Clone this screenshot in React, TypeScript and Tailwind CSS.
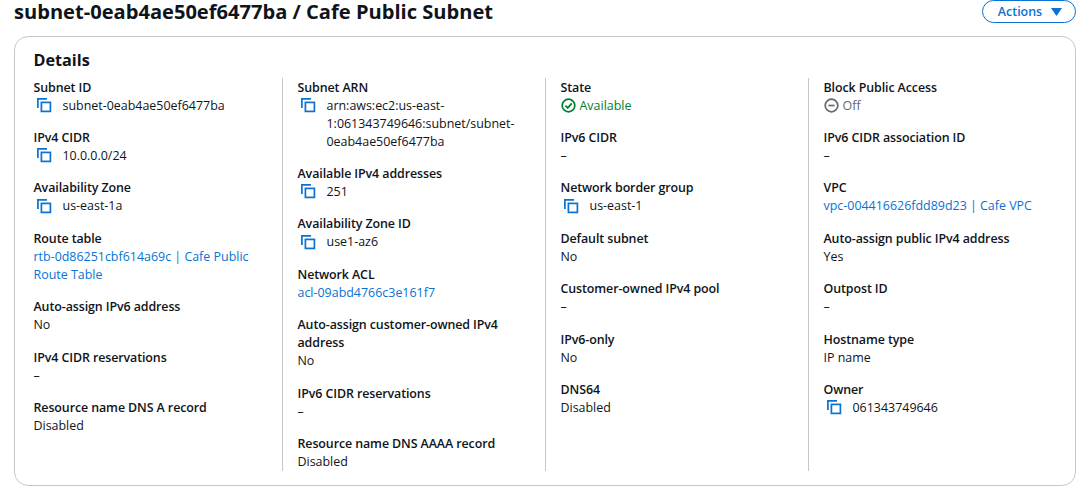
const F = "[font-family:'Open_Sans','Noto_Sans',sans-serif]";

function CopyIcon() {
  return (
    <svg width="16" height="16" viewBox="0 0 16 16" fill="none" stroke="#0972d3" strokeWidth="1.7" className="shrink-0">
      <path d="M1.9 11V1.9H11" />
      <rect x="5.4" y="5.4" width="9" height="9" />
    </svg>
  );
}

function Copy({ text }: { text: string }) {
  return (
    <div className="flex items-start pl-[2px]">
      <span className="w-[27px] shrink-0 pt-[0.5px]"><CopyIcon /></span>
      <span>{text}</span>
    </div>
  );
}

function Item({ label, children }: { label: string; children: React.ReactNode }) {
  return (
    <div>
      <div className="font-semibold tracking-[-0.1px] text-[#0f141a]">{label}</div>
      <div className="text-[#0f141a]">{children}</div>
    </div>
  );
}

const L = ({ children }: { children: React.ReactNode }) => <span className="text-[#0972d3]">{children}</span>;

function Col({ first, children }: { first?: boolean; children: React.ReactNode }) {
  return (
    <div className={first ? "flex w-[248.5px] flex-col gap-[14.4px] pt-[0.6px]" : "flex w-[263px] flex-col gap-[14.4px] border-l border-[#c6c6cd] pl-[14.5px] pr-[20px] pt-[0.6px]"}>
      {children}
    </div>
  );
}

export default function App() {
  return (
    <div className={`h-[489px] w-[1082px] overflow-hidden bg-white text-[12.45px] leading-[18px] ${F}`}>
      <div className="flex h-[36px] items-start justify-between pl-[14px] pr-[6px]">
        <h1 className="text-[20.1px] font-bold leading-[23px] text-[#0f141a]">subnet-0eab4ae50ef6477ba / Cafe Public Subnet</h1>
        <button className="flex h-[23px] w-[94px] items-center justify-center gap-[9px] rounded-full border border-[#0972d3] pl-[2px] text-[12.45px] font-semibold text-[#0972d3]">
          Actions
          <svg width="11" height="8" viewBox="0 0 11 8"><path d="M0 0h11L5.5 8z" fill="#0972d3" /></svg>
        </button>
      </div>
      <section className="ml-[14px] h-[450px] w-[1062px] rounded-[14px] border border-[#c6c6cd] pl-[18.5px] pt-[12px]">
        <h2 className="text-[16.2px] font-bold leading-[22px] text-[#0f141a]">Details</h2>
        <div className="mt-[7px] flex h-[393px] items-stretch">
          <Col first>
            <Item label="Subnet ID"><Copy text="subnet-0eab4ae50ef6477ba" /></Item>
            <Item label="IPv4 CIDR"><Copy text="10.0.0.0/24" /></Item>
            <Item label="Availability Zone"><Copy text="us-east-1a" /></Item>
            <Item label="Route table"><L>rtb-0d86251cbf614a69c | Cafe Public Route Table</L></Item>
            <Item label="Auto-assign IPv6 address">No</Item>
            <Item label="IPv4 CIDR reservations">–</Item>
            <Item label="Resource name DNS A record">Disabled</Item>
          </Col>
          <Col>
            <Item label="Subnet ARN"><Copy text="arn:aws:ec2:us-east-1:061343749646:subnet/subnet-0eab4ae50ef6477ba" /></Item>
            <Item label="Available IPv4 addresses"><Copy text="251" /></Item>
            <Item label="Availability Zone ID"><Copy text="use1-az6" /></Item>
            <Item label="Network ACL"><L>acl-09abd4766c3e161f7</L></Item>
            <Item label="Auto-assign customer-owned IPv4 address">No</Item>
            <Item label="IPv6 CIDR reservations">–</Item>
            <Item label="Resource name DNS AAAA record">Disabled</Item>
          </Col>
          <Col>
            <Item label="State">
              <span className="flex items-center gap-[4px] text-[#00802f]">
                <svg width="15" height="15" viewBox="0 0 15 15" fill="none" stroke="#00802f" strokeWidth="1.7"><circle cx="7.5" cy="7.5" r="6.3" /><path d="M4.4 7.6l2.3 2.3L10.8 5.4" /></svg>
                Available
              </span>
            </Item>
            <Item label="IPv6 CIDR">–</Item>
            <Item label="Network border group"><Copy text="us-east-1" /></Item>
            <Item label="Default subnet">No</Item>
            <Item label="Customer-owned IPv4 pool">–</Item>
            <Item label="IPv6-only">No</Item>
            <Item label="DNS64">Disabled</Item>
          </Col>
          <Col>
            <Item label="Block Public Access">
              <span className="flex items-center gap-[4px] text-[#656871]">
                <svg width="15" height="15" viewBox="0 0 15 15" fill="none" stroke="#656871" strokeWidth="1.7"><circle cx="7.5" cy="7.5" r="6.3" /><path d="M4.4 7.5h6.2" /></svg>
                Off
              </span>
            </Item>
            <Item label="IPv6 CIDR association ID">–</Item>
            <Item label="VPC"><L>vpc-004416626fdd89d23 | Cafe VPC</L></Item>
            <Item label="Auto-assign public IPv4 address">Yes</Item>
            <Item label="Outpost ID">–</Item>
            <Item label="Hostname type">IP name</Item>
            <Item label="Owner"><Copy text="061343749646" /></Item>
          </Col>
        </div>
      </section>
    </div>
  );
}
